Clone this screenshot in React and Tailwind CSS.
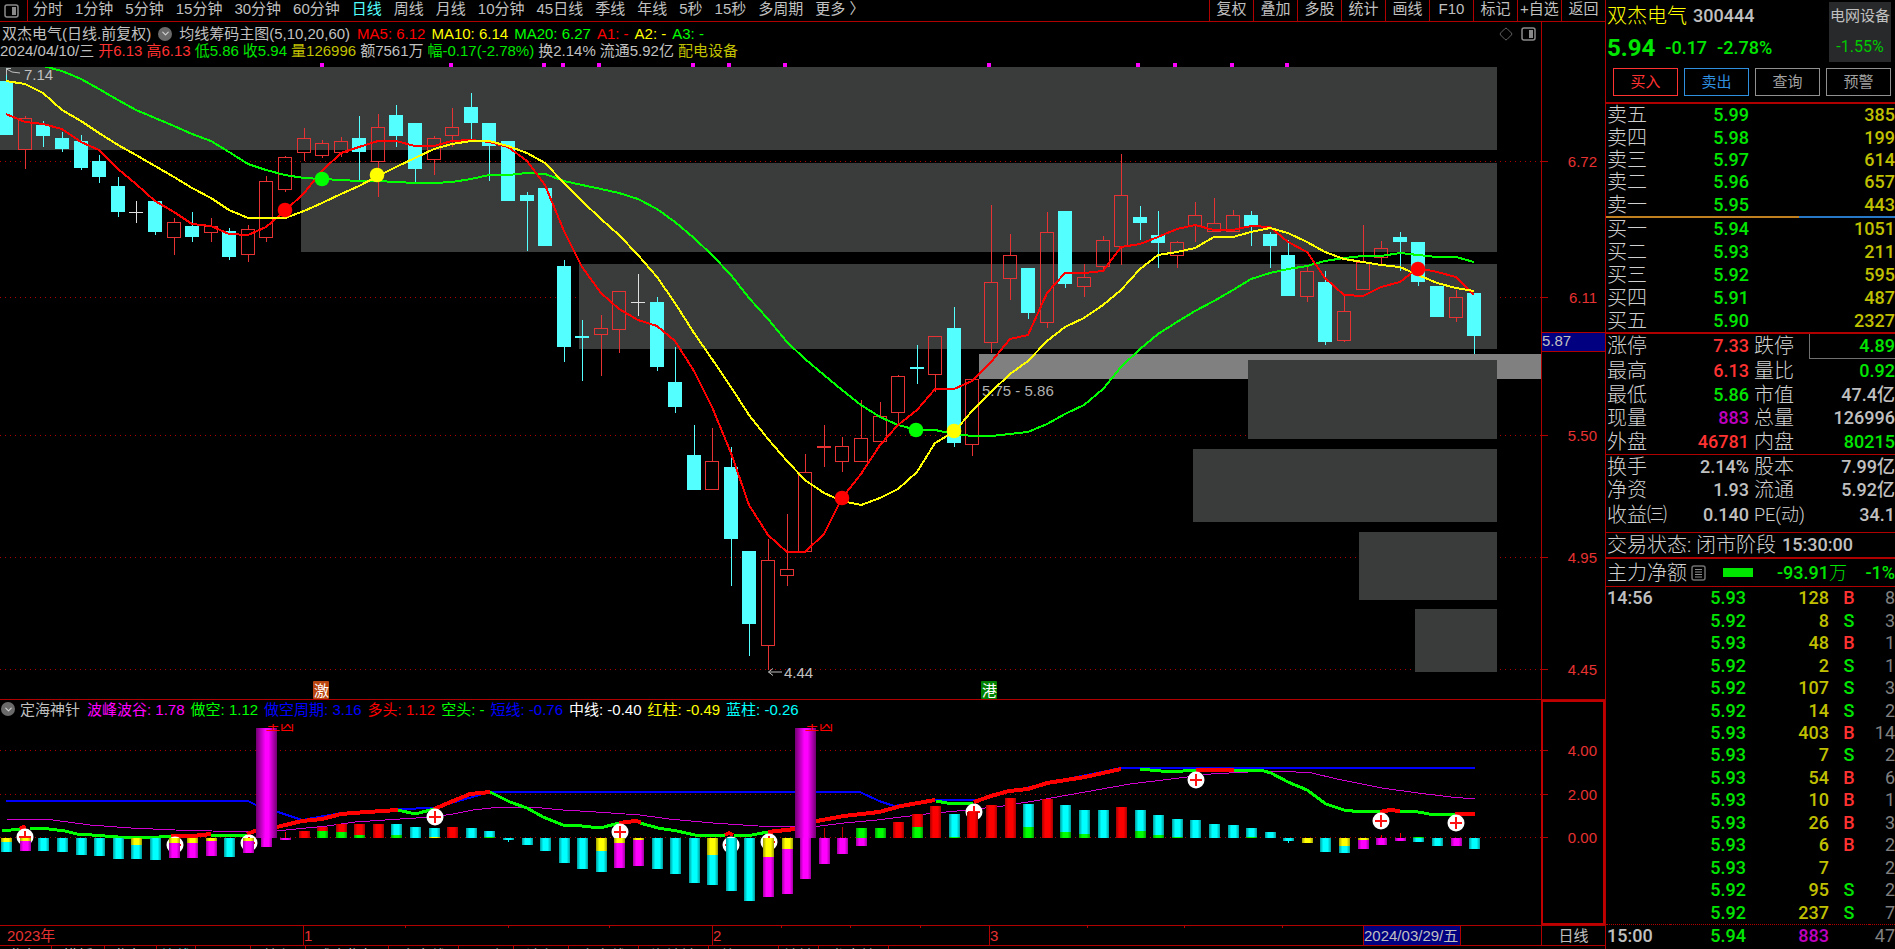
import React from 'react'
import clsx from 'clsx'
import { ChevronDown, Diamond } from 'lucide-react'

const periods = [
  '分时', '1分钟', '5分钟', '15分钟', '30分钟', '60分钟', '日线', '周线', '月线',
  '10分钟', '45日线', '季线', '年线', '5秒', '15秒', '多周期', '更多 〉',
]

const tools = ['复权', '叠加', '多股', '统计', '画线', 'F10', '标记', '+自选', '返回']

const maLegend = [
  { text: 'MA5: 6.12', color: 'text-[#ff0000]' },
  { text: 'MA10: 6.14', color: 'text-[#ffff00]' },
  { text: 'MA20: 6.27', color: 'text-[#00ff00]' },
  { text: 'A1: -', color: 'text-[#ff0000]' },
  { text: 'A2: -', color: 'text-[#ffff00]' },
  { text: 'A3: -', color: 'text-[#00ff00]' },
]

const dayInfo = [
  { text: '2024/04/10/三', color: 'text-[#c0c0c0]' },
  { text: '开6.13', color: 'text-[#ff3232]' },
  { text: '高6.13', color: 'text-[#ff3232]' },
  { text: '低5.86', color: 'text-[#00e600]' },
  { text: '收5.94', color: 'text-[#00e600]' },
  { text: '量126996', color: 'text-[#c0c000]' },
  { text: '额7561万', color: 'text-[#c0c0c0]' },
  { text: '幅-0.17(-2.78%)', color: 'text-[#00e600]' },
  { text: '换2.14%', color: 'text-[#c0c0c0]' },
  { text: '流通5.92亿', color: 'text-[#c0c0c0]' },
  { text: '配电设备', color: 'text-[#c0c000]' },
]

const subLegend = [
  { text: '波峰波谷: 1.78', color: 'text-[#ff00ff]' },
  { text: '做空: 1.12', color: 'text-[#00ff00]' },
  { text: '做空周期: 3.16', color: 'text-[#0000ff]' },
  { text: '多头: 1.12', color: 'text-[#ff0000]' },
  { text: '空头: -', color: 'text-[#00ff00]' },
  { text: '短线: -0.76', color: 'text-[#0000ff]' },
  { text: '中线: -0.40', color: 'text-[#ffffff]' },
  { text: '红柱: -0.49', color: 'text-[#ffff00]' },
  { text: '蓝柱: -0.26', color: 'text-[#00ffff]' },
]

// [kind, body top, body bottom, high, low] - d: down, u: up, x: doji
const candles = [
  ['d', 81, 135, 68, 135], ['u', 118, 150, 116, 169], ['d', 125, 136, 121, 147], ['d', 138, 149, 132, 152],
  ['d', 141, 168, 135, 170], ['d', 161, 177, 155, 183], ['d', 186, 212, 177, 217], ['x', 212, 213, 201, 223],
  ['d', 201, 232, 201, 235], ['u', 222, 238, 218, 255], ['d', 226, 237, 212, 242], ['u', 226, 233, 218, 242],
  ['d', 231, 257, 228, 260], ['u', 229, 255, 225, 262], ['u', 181, 238, 176, 242], ['u', 157, 190, 156, 192],
  ['u', 138, 153, 128, 161], ['u', 143, 156, 140, 158], ['u', 141, 153, 137, 157], ['d', 138, 152, 116, 180],
  ['u', 127, 162, 114, 197], ['d', 115, 136, 105, 147], ['d', 123, 169, 123, 182], ['u', 138, 160, 136, 175],
  ['u', 127, 136, 108, 147], ['d', 107, 123, 93, 139], ['d', 123, 146, 123, 181], ['d', 141, 201, 141, 201],
  ['d', 195, 201, 192, 251], ['d', 188, 246, 188, 246], ['d', 266, 347, 260, 362], ['d', 336, 338, 320, 381],
  ['u', 328, 335, 315, 376], ['u', 291, 330, 291, 353], ['x', 302, 303, 274, 316], ['d', 302, 367, 297, 371],
  ['d', 382, 407, 347, 413], ['d', 455, 490, 425, 490], ['u', 461, 490, 428, 490], ['d', 467, 539, 447, 586],
  ['d', 551, 624, 551, 656], ['u', 560, 646, 539, 670], ['u', 569, 576, 514, 586], ['u', 472, 552, 454, 552],
  ['u', 446, 448, 425, 467], ['u', 446, 462, 437, 472], ['u', 438, 462, 400, 462], ['u', 416, 442, 402, 442],
  ['u', 376, 413, 375, 424], ['d', 367, 369, 345, 384], ['u', 336, 375, 336, 392], ['d', 328, 443, 307, 447],
  ['u', 379, 445, 379, 456], ['u', 282, 343, 205, 353], ['u', 255, 279, 234, 300], ['d', 268, 313, 268, 319],
  ['u', 232, 323, 212, 328], ['d', 211, 284, 211, 288], ['u', 277, 287, 264, 297], ['u', 240, 267, 236, 271],
  ['u', 195, 247, 154, 265], ['d', 217, 223, 206, 240], ['d', 235, 243, 211, 268], ['u', 242, 256, 241, 268],
  ['u', 215, 226, 202, 242], ['u', 223, 232, 198, 232], ['u', 215, 232, 210, 232], ['d', 215, 227, 211, 246],
  ['d', 234, 246, 232, 268], ['d', 255, 296, 240, 296], ['u', 271, 297, 267, 302], ['d', 282, 342, 271, 345],
  ['u', 311, 341, 296, 342], ['u', 262, 290, 225, 290], ['u', 248, 258, 241, 265], ['d', 237, 242, 232, 271],
  ['d', 242, 282, 242, 286], ['d', 286, 317, 286, 317], ['u', 297, 318, 290, 322], ['d', 293, 336, 293, 354],
]

const ma5 = [
  114, 122, 124, 129, 142, 150, 169, 184, 201, 212, 224, 226, 234, 235, 227, 211, 193, 171, 153, 147,
  141, 141, 146, 146, 141, 140, 142, 147, 161, 185, 231, 267, 293, 309, 320, 326, 341, 371, 407, 453,
  505, 535, 552, 552, 534, 498, 474, 445, 425, 410, 389, 389, 381, 362, 339, 335, 293, 273, 273, 271,
  247, 244, 237, 229, 225, 230, 230, 226, 227, 242, 252, 278, 295, 296, 287, 282, 268, 272, 277, 295,
]

const ma10 = [
  81, 84, 93, 110, 121, 133, 145, 155, 166, 177, 188, 198, 210, 218, 218, 218, 211, 203, 194, 186,
  176, 167, 158, 149, 144, 141, 141, 146, 153, 163, 183, 201, 219, 235, 255, 277, 303, 333, 359, 387,
  415, 439, 461, 480, 493, 501, 505, 498, 489, 472, 443, 432, 411, 392, 374, 361, 341, 327, 318, 305,
  290, 269, 255, 252, 248, 237, 237, 232, 228, 233, 242, 252, 259, 262, 265, 267, 275, 283, 288, 291,
]

const ma20 = [
  50, 60, 66, 71, 79, 89, 100, 110, 118, 126, 134, 141, 152, 164, 170, 175, 178, 179, 180, 181,
  181, 182, 183, 183, 182, 179, 175, 175, 173, 174, 181, 185, 189, 193, 199, 209, 222, 238, 255, 275,
  298, 319, 342, 359, 375, 390, 405, 417, 425, 430, 430, 434, 436, 436, 434, 432, 424, 414, 405, 389,
  367, 349, 334, 322, 311, 301, 290, 279, 273, 269, 266, 261, 258, 256, 256, 253, 255, 257, 257, 262,
]

const chipBoxes = [
  [0, 67, 1497, 83], [301, 163, 1196, 89], [579, 264, 918, 85],
  [1248, 360, 249, 79], [1193, 449, 304, 73], [1359, 532, 138, 68], [1415, 609, 82, 63],
]

const signals = [
  [285, 210, '#ff0000'], [322, 179, '#00ff00'], [377, 175, '#ffff00'], [842, 498, '#ff0000'],
  [916, 430, '#00ff00'], [954, 431, '#ffff00'], [1418, 269, '#ff0000'],
]

const ticksTop = [322, 451, 544, 563, 599, 693, 729, 785, 989, 1138, 1175, 1232, 1287]

const priceScale = [[161, '6.72'], [297, '6.11'], [435, '5.50'], [557, '4.95'], [669, '4.45']]
const subScale = [[750, '4.00'], [794, '2.00'], [837, '0.00']]

// bar stacks of the lower indicator: [fill, top, bottom] per day
const bars = [
  [['y', 838, 842], ['c', 842, 852]], [['y', 838, 841], ['m', 841, 851]], [['c', 838, 851]], [['c', 838, 852]],
  [['c', 838, 855]], [['c', 838, 856]], [['c', 838, 859]], [['y', 838, 845], ['c', 845, 859]],
  [['c', 838, 860]], [['y', 838, 843], ['m', 843, 858]], [['y', 838, 843], ['m', 843, 858]], [['y', 838, 841], ['m', 841, 856]],
  [['c', 838, 857]], [['y', 838, 841], ['m', 841, 853]], [['m', 838, 847]], [['m', 838, 840]],
  [['r', 831, 838]], [['r', 827, 831], ['g', 831, 838]], [['r', 824, 832], ['g', 832, 838]], [['r', 824, 835], ['g', 835, 838]],
  [['r', 824, 838]], [['c', 824, 835], ['g', 835, 838]], [['c', 827, 838]], [['c', 828, 837], ['y', 837, 838]],
  [['r', 827, 838]], [['c', 828, 838]], [['c', 831, 837], ['g', 837, 838]], [['c', 838, 840]],
  [['c', 838, 845]], [['c', 838, 851]], [['c', 838, 863]], [['c', 838, 869]],
  [['y', 838, 851], ['c', 851, 872]], [['y', 838, 843], ['m', 843, 868]], [['y', 838, 840], ['m', 840, 866]], [['c', 838, 869]],
  [['c', 838, 874]], [['c', 838, 883]], [['y', 838, 855], ['c', 855, 885]], [['c', 838, 891]],
  [['c', 838, 901]], [['y', 838, 857], ['m', 857, 897]], [['y', 838, 849], ['m', 849, 894]], [['m', 838, 879]],
  [['m', 838, 864]], [['m', 838, 854]], [['g', 828, 838], ['m', 838, 846]], [['g', 828, 838]],
  [['r', 822, 838]], [['r', 814, 827], ['g', 827, 838]], [['r', 806, 838]], [['c', 814, 837], ['g', 837, 838]],
  [['r', 812, 838]], [['r', 805, 838]], [['r', 798, 838]], [['c', 804, 827], ['g', 827, 838]],
  [['r', 799, 838]], [['c', 805, 832], ['g', 832, 838]], [['c', 810, 834], ['g', 834, 838]], [['c', 810, 838]],
  [['r', 807, 838]], [['c', 810, 831], ['g', 831, 838]], [['c', 815, 835], ['g', 835, 838]], [['c', 819, 837], ['g', 837, 838]],
  [['c', 820, 838]], [['c', 824, 838]], [['c', 825, 838]], [['c', 828, 837], ['g', 837, 838]],
  [['c', 832, 838]], [['c', 838, 841]], [['y', 838, 843]], [['c', 838, 852]],
  [['y', 838, 846], ['c', 846, 853]], [['y', 838, 840], ['m', 840, 849]], [['m', 838, 845]], [['m', 838, 841]],
  [['g', 837, 838], ['c', 838, 842]], [['c', 838, 846]], [['m', 838, 846]], [['c', 838, 849]],
]

const barWicks = [
  [15, 832, 838, '#ff0000'], [27, 840, 842, '#00ffff'], [44, 828, 838, '#c00000'], [45, 827, 838, '#c00000'],
  [69, 841, 843, '#00ffff'], [74, 835, 838, '#ff0000'], [75, 833, 838, '#ff0000'],
]

const gradients = [
  ['y', '#ffff00', '#a0a000'], ['c', '#00ffff', '#009a9a'], ['m', '#ff00ff', '#a000a0'],
  ['r', '#ff0000', '#a80000'], ['g', '#00ff00', '#00a000'],
]

const greenRuns = [
  '2,831 20,829', '30,828 49,829 65,831 77,834 92,835 118,837 147,838 171,836', '211,835 247,835',
  '398,810 415,814 434,809', '490,792 510,802 527,808 543,817 563,825 582,826 600,828 619,823',
  '640,823 658,828 677,831 695,835 725,835', '734,835 752,835 768,832', '936,801 952,804 973,803',
  '1140,769 1171,772 1196,770', '1234,770 1250,770 1264,771 1271,773 1288,782 1307,790 1326,804 1344,810 1361,812 1380,811',
  '1400,811 1418,812 1435,815 1455,814',
]

const redRuns = [
  '20,829 23,827 26,828', '171,836 193,836 211,834', '247,834 255,831 277,827 302,821 322,819 341,814 367,812 398,810',
  '434,809 453,801 470,794 490,792', '619,823 635,821 641,822', '725,835 729,833 733,835',
  '768,832 795,829 817,821 844,816 879,812 901,806 935,800', '974,802 991,796 1009,791 1028,789 1047,783 1085,777 1121,769',
  '1196,770 1234,770', '1380,812 1390,810 1400,811', '1455,814 1475,814',
]

const blueLine =
  '6,801 248,801 256,805 278,812 302,820 341,813 398,809 434,808 490,792 860,792 879,801 894,806 936,800 977,800 987,797 1047,783 1121,768 1475,768'

const magentaLine =
  '6,819 53,820 90,825 131,828 175,830 212,831 249,832 286,830 327,826 355,822 400,819 433,817 453,814 473,810 500,807 531,807 563,810 596,812 640,815 669,819 713,823 758,826 795,827 820,826 844,823 877,820 926,814 967,810 1003,806 1040,800 1085,792 1130,784 1171,779 1211,774 1248,772 1280,771 1312,773 1337,779 1382,788 1418,793 1451,797 1475,799'

const crossMarks = [
  [25, 837], [175, 845], [249, 843], [435, 817], [620, 832], [731, 845],
  [769, 842], [974, 812], [1196, 780], [1381, 821], [1456, 823],
]

const asks = [
  ['卖五', '5.99', '385'], ['卖四', '5.98', '199'], ['卖三', '5.97', '614'],
  ['卖二', '5.96', '657'], ['卖一', '5.95', '443'],
]

const bids = [
  ['买一', '5.94', '1051'], ['买二', '5.93', '211'], ['买三', '5.92', '595'],
  ['买四', '5.91', '487'], ['买五', '5.90', '2327'],
]

const RED = 'text-[#ff3232]'
const GREEN = 'text-[#00e600]'
const GRAY = 'text-[#c0c0c0]'

const stats = [
  ['涨停', '7.33', RED, '跌停', '4.89', GREEN],
  ['最高', '6.13', RED, '量比', '0.92', GREEN],
  ['最低', '5.86', GREEN, '市值', '47.4亿', GRAY],
  ['现量', '883', 'text-[#c000c0]', '总量', '126996', GRAY],
  ['外盘', '46781', RED, '内盘', '80215', GREEN],
]

const basics = [
  ['换手', '2.14%', GRAY, '股本', '7.99亿', GRAY],
  ['净资', '1.93', GRAY, '流通', '5.92亿', GRAY],
  ['收益㈢', '0.140', GRAY, 'PE(动)', '34.1', GRAY],
]

const trades = [
  ['14:56', '5.93', '128', 'B', '8'], ['', '5.92', '8', 'S', '3'], ['', '5.93', '48', 'B', '1'],
  ['', '5.92', '2', 'S', '1'], ['', '5.92', '107', 'S', '3'], ['', '5.92', '14', 'S', '2'],
  ['', '5.93', '403', 'B', '14'], ['', '5.93', '7', 'S', '2'], ['', '5.93', '54', 'B', '6'],
  ['', '5.93', '10', 'B', '1'], ['', '5.93', '26', 'B', '3'], ['', '5.93', '6', 'B', '2'],
  ['', '5.93', '7', '', '2'], ['', '5.92', '95', 'S', '2'], ['', '5.92', '237', 'S', '7'],
]

const bottomTabs = [
  ['指标', 'w-[52px]'], ['模板', 'w-[53px]'], ['指标', 'w-[52px]'], ['均线', 'w-[39px]'], ['画面', 'w-[55px]'],
  ['特色', 'w-[55px]'], ['成交指标', 'w-[83px]'], ['多空线', 'w-[70px]'], ['两融', 'w-[55px]'], ['波段', 'w-[55px]'],
  ['主力线', 'w-[70px]'], ['海神针', 'w-[70px]'], ['筹码图', 'w-[70px]'], ['神针', 'w-[40px]'], ['龙虎榜', 'w-[70px]'],
]

const xAt = (i) => Math.round(6.3 + 18.58 * i)
const toPoints = (ys) => ys.map((y, i) => `${xAt(i)},${y}`).join(' ')

const PanelIcon = () => (
  <svg viewBox="0 0 16 16" className="h-4 w-4 shrink-0" aria-hidden="true">
    <rect x="1" y="2" width="13" height="12" rx="2" fill="none" stroke="#8a8a8a" strokeWidth="1.5" />
    <rect x="8" y="4" width="4" height="8" fill="#8a8a8a" />
  </svg>
)

const FoldButton = ({ label }) => (
  <button aria-label={label} className="flex h-[14px] w-[14px] shrink-0 items-center justify-center rounded-full bg-[#6a6a6a] text-[#d0d0d0]">
    <ChevronDown size={11} strokeWidth={2.5} />
  </button>
)

const Legend = ({ items, className }) => (
  <div className={clsx('flex', className)}>
    {items.map((item) => (
      <span key={item.text} className={item.color}>{item.text}</span>
    ))}
  </div>
)

const GridLines = ({ scale }) =>
  scale.map(([y]) => (
    <line key={y} x1="0" x2="1541" y1={y + 0.5} y2={y + 0.5} stroke="#b00000" strokeDasharray="1 4" />
  ))

const Candle = ({ i, data }) => {
  const [kind, top, bottom, high, low] = data
  const x = xAt(i)
  const color = { d: '#54ffff', u: '#e63232', x: '#e0e0e0' }[kind]
  if (kind === 'u' && bottom - top > 2) {
    return (
      <g stroke={color} fill="none">
        <rect x={x - 6.5} y={top + 0.5} width="13" height={bottom - top - 1} />
        {high < top && <line x1={x + 0.5} x2={x + 0.5} y1={high} y2={top} />}
        {low > bottom && <line x1={x + 0.5} x2={x + 0.5} y1={bottom} y2={low} />}
      </g>
    )
  }
  return (
    <g fill={color}>
      <rect x={x - 7} y={top} width="14" height={bottom - top} />
      <rect x={x} y={high} width="1" height={low - high} />
    </g>
  )
}

const MainChart = () => (
  <svg viewBox="0 60 1541 639" className="block h-auto w-full text-[15px]" role="img" aria-label="日线K线图">
    <g shapeRendering="crispEdges">
      <GridLines scale={priceScale} />
      <rect x="979" y="354" width="562" height="25" fill="#808080" />
      {chipBoxes.map(([x, y, w, h]) => (
        <rect key={y} x={x} y={y} width={w} height={h} fill="#3a3c3b" />
      ))}
      {ticksTop.map((x) => (
        <rect key={x} x={x - 2} y="63" width="4" height="4" fill="#ff00ff" />
      ))}
      {candles.map((c, i) => (
        <Candle key={i} i={i} data={c} />
      ))}
    </g>
    <text x="982" y="396" fill="#b0b0b0">5.75 - 5.86</text>
    <g fill="none" strokeWidth="2" strokeLinejoin="round" shapeRendering="crispEdges">
      <polyline points={toPoints(ma20)} stroke="#00ff00" clipPath="url(#plot)" />
      <polyline points={toPoints(ma5)} stroke="#ff0000" />
      <polyline points={toPoints(ma10)} stroke="#ffff00" />
    </g>
    <clipPath id="plot">
      <rect x="0" y="67" width="1541" height="620" />
    </clipPath>
    {signals.map(([x, y, fill]) => (
      <circle key={x} cx={x} cy={y} r="7.3" fill={fill} />
    ))}
    <g fill="none" stroke="#c0c0c0">
      <path d="M6.5 75V68.500H11M6.500 69L12 72L20 73" />
      <path d="M782 672H768.500M773 668.500L768.500 672L773 675.500" />
    </g>
    <text x="24" y="80" fill="#c0c0c0">7.14</text>
    <text x="784" y="678" fill="#c0c0c0">4.44</text>
    <rect x="313" y="681" width="16" height="18" rx="1" fill="#b8450f" />
    <text x="314" y="696" fill="#ffffff">激</text>
    <rect x="981" y="681" width="16" height="18" rx="1" fill="#008000" />
    <text x="982" y="696" fill="#ffffff">港</text>
  </svg>
)

const SubChart = () => (
  <svg viewBox="0 724 1541 201" className="block h-auto w-full text-[14px]" role="img" aria-label="定海神针指标">
    <defs>
      {gradients.map(([id, light, dark]) => (
        <linearGradient key={id} id={id}>
          <stop offset="0" stopColor={dark} />
          <stop offset="0.3" stopColor={light} />
          <stop offset="0.7" stopColor={light} />
          <stop offset="1" stopColor={dark} />
        </linearGradient>
      ))}
      <linearGradient id="pillar">
        <stop offset="0" stopColor="#700070" />
        <stop offset="0.45" stopColor="#ff00ff" />
        <stop offset="0.6" stopColor="#ff00ff" />
        <stop offset="1" stopColor="#700070" />
      </linearGradient>
    </defs>
    <g shapeRendering="crispEdges">
      <GridLines scale={subScale} />
    </g>
    <g fill="none" shapeRendering="crispEdges">
      <polyline points={blueLine} stroke="#0000ff" strokeWidth="2" />
      <polyline points={magentaLine} stroke="#d000d0" />
      {greenRuns.map((p) => (
        <polyline key={p} points={p} stroke="#00ff00" strokeWidth="3" />
      ))}
      {redRuns.map((p) => (
        <polyline key={p} points={p} stroke="#ff0000" strokeWidth="4" />
      ))}
    </g>
    {crossMarks.map(([x, y]) => (
      <g key={x}>
        <circle cx={x} cy={y} r="8.5" fill="#ffffff" />
        <path d={`M${x - 6} ${y}h12M${x} ${y - 6}v12`} stroke="#ff1010" strokeWidth="2" />
      </g>
    ))}
    <g shapeRendering="crispEdges">
      {barWicks.map(([i, top, bottom, fill]) => (
        <rect key={i} x={xAt(i)} y={top} width="1" height={bottom - top} fill={fill} />
      ))}
      <rect x="256" y="728" width="21" height="110" fill="url(#pillar)" />
      <rect x="795" y="728" width="21" height="110" fill="url(#pillar)" />
      {bars.map((stack, i) =>
        stack.map(([fill, top, bottom]) => (
          <rect key={`${i}-${fill}`} x={xAt(i) - 5} y={top} width="11" height={bottom - top} fill={`url(#${fill})`} />
        ))
      )}
    </g>
    <text x="266" y="730" fill="#ff0000">主凶</text>
    <text x="805" y="730" fill="#ff0000">主凶</text>
  </svg>
)

const AxisLabels = ({ scale }) =>
  scale.map(([y, label]) => (
    <g key={label}>
      <line x1="1541" x2="1548" y1={y + 0.5} y2={y + 0.5} stroke="#b00000" />
      <text x="1597" y={y + 6} textAnchor="end" fill="#e63232">{label}</text>
    </g>
  ))

const QuoteTable = ({ rows, className }) => (
  <table className={clsx('w-full table-fixed', className)}>
    <tbody>
      {rows.map(([name, price, volume]) => (
        <tr key={name}>
          <th scope="row" className="w-16 pl-px text-left text-xl leading-5 font-light text-[#d0d0d0]">{name}</th>
          <td className="w-[79px] text-right text-[#00e600]">{price}</td>
          <td className="text-right text-[#c0c000]">{volume}</td>
        </tr>
      ))}
    </tbody>
  </table>
)

const StatTable = ({ rows, className }) => (
  <table className={clsx('w-full table-fixed', className)}>
    <tbody>
      {rows.map(([a, aValue, aColor, b, bValue, bColor]) => (
        <tr key={a}>
          <th scope="row" className="w-16 pl-px text-left text-xl leading-5 font-light whitespace-nowrap text-[#d0d0d0]">{a}</th>
          <td className={clsx('w-[79px] text-right', aColor)}>{aValue}</td>
          <th scope="row" className="w-[60px] pl-[5px] text-left text-xl leading-5 font-light whitespace-nowrap text-[#d0d0d0]">
            {b === 'PE(动)' ? <span className="text-lg leading-5">{b}</span> : b}
          </th>
          <td className={clsx('text-right', bColor, b === '跌停' && 'border border-r-0 border-[#707070]')}>{bValue}</td>
        </tr>
      ))}
    </tbody>
  </table>
)

const TradeRow = ({ time, price, volume, side, count, volumeColor }) => (
  <tr>
    <td className="w-16 pl-px text-[#c0c0c0]">{time}</td>
    <td className="w-[76px] text-right text-[#00e600]">{price}</td>
    <td className={clsx('w-[83px] text-right', volumeColor)}>{volume}</td>
    <td className={clsx('w-10 text-center', side === 'B' ? 'text-[#ff3232]' : 'text-[#00e600]')}>{side}</td>
    <td className="text-right font-normal text-[#808080]">{count}</td>
  </tr>
)

const App = () => {
  return (
    <div className="flex h-screen overflow-hidden bg-black font-['Liberation_Sans','Noto_Sans_CJK_SC',sans-serif] text-[15px] leading-[17px] whitespace-nowrap text-[#c0c0c0]">
      <main className="min-w-0 flex-1">
        {/* Toolbar */}
        <div className="flex h-[22px] border-b border-[#b00000]">
          <div className="flex w-7 items-center border-r border-[#b00000] pl-1">
            <PanelIcon />
          </div>
          <nav className="flex flex-1 items-start gap-3 overflow-hidden pl-[5px]">
            {periods.map((p) => (
              <button key={p} className={p === '日线' ? 'text-[#54ffff]' : undefined}>{p}</button>
            ))}
          </nav>
          <div className="flex">
            {tools.map((t) => (
              <button key={t} className="flex w-11 items-start justify-center border-l border-[#b00000]">{t}</button>
            ))}
          </div>
        </div>

        {/* Price chart */}
        <section className="flex border-b border-[#b00000]">
          <div className="min-w-0 flex-1">
            <header className="h-[38px] pt-[3px]">
              <div className="flex items-center gap-[7px]">
                <h1 className="pl-0.5">双杰电气(日线.前复权)</h1>
                <FoldButton label="主图指标" />
                <span>均线筹码主图(5,10,20,60)</span>
                <Legend items={maLegend} className="gap-[6px]" />
                <div className="ml-auto flex items-center gap-2 pr-1 text-[#707070]">
                  <Diamond size={14} strokeWidth={1.5} />
                  <PanelIcon />
                </div>
              </div>
              <Legend items={dayInfo} className="gap-1" />
            </header>
            <MainChart />
          </div>
          <svg viewBox="1541 22 64 677" className="block h-auto w-16 shrink-0 text-[15px]" role="img" aria-label="价格坐标">
            <line x1="1541.5" x2="1541.5" y1="22" y2="699" stroke="#b00000" />
            <AxisLabels scale={priceScale} />
            <rect x="1541.5" y="332.5" width="64" height="19" fill="#000080" stroke="#b00000" />
            <text x="1542" y="346" fill="#c0c0c0">5.87</text>
          </svg>
        </section>

        {/* Indicator */}
        <section className="flex">
          <div className="min-w-0 flex-1">
            <header className="flex h-6 items-center gap-[5px] pb-[6px] pl-px">
              <FoldButton label="副图指标" />
              <h2 className="pr-0.5">定海神针</h2>
              <Legend items={subLegend} className="gap-[6px]" />
            </header>
            <SubChart />
          </div>
          <svg viewBox="1541 700 64 225" className="block h-auto w-16 shrink-0 text-[15px]" role="img" aria-label="指标坐标">
            <rect x="1542" y="701" width="62" height="223" fill="none" stroke="#c00000" strokeWidth="2" />
            <AxisLabels scale={subScale} />
          </svg>
        </section>

        {/* Time axis */}
        <div className="flex border-y border-[#b00000]">
          <svg viewBox="0 926 1541 19" className="block h-auto min-w-0 flex-1 text-[15px]" role="img" aria-label="时间坐标">
            <g stroke="#b00000">
              {[303, 712, 989].map((x) => (
                <line key={x} x1={x + 0.5} x2={x + 0.5} y1="926" y2="945" />
              ))}
              {[405, 508, 609, 781, 850, 920, 1087, 1184, 1282].map((x) => (
                <line key={x} x1={x + 0.5} x2={x + 0.5} y1="926" y2="928" />
              ))}
            </g>
            <g fill="#e63232">
              <text x="7" y="941">2023年</text>
              <text x="304" y="941">1</text>
              <text x="713" y="941">2</text>
              <text x="990" y="941">3</text>
            </g>
            <rect x="1363.5" y="925.5" width="97" height="20" fill="#000080" stroke="#b00000" />
            <text x="1364" y="941" fill="#c0c0c0">2024/03/29/五</text>
          </svg>
          <div className="flex w-16 items-center justify-center border-l border-[#b00000]">
            <span>日线</span>
          </div>
        </div>

        {/* Indicator tabs */}
        <div className="flex">
          {bottomTabs.map(([name, width], i) => (
            <button key={i} className={clsx('border-r border-[#b00000] pt-px text-center', width, i === 3 && 'text-[#54ffff]')}>{name}</button>
          ))}
        </div>
      </main>

      {/* Quote panel */}
      <aside className="w-[290px] shrink-0 overflow-hidden border-l border-[#b00000] font-['Roboto','Noto_Sans_CJK_SC',sans-serif] text-lg leading-5 font-medium">
        <div className="border-b-2 border-[#b00000] pb-[6px]">
          <div className="flex justify-between pt-0.5 pr-1">
            <div className="pl-px">
              <div className="flex items-center gap-[6px] pt-0.5">
                <h2 className="text-xl leading-6 font-light text-[#ffff00]">双杰电气</h2>
                <span>300444</span>
              </div>
              <div className="flex items-center gap-[10px] pt-2 text-[#00e600]">
                <span className="text-2xl leading-6 font-bold">5.94</span>
                <span>-0.17</span>
                <span>-2.78%</span>
              </div>
            </div>
            <a href="#sector" className="flex h-[60px] w-[62px] flex-col justify-between bg-[#28292b] pt-1 pb-[5px] text-center text-[15px] font-normal">
              <span className="text-[#c0c0c0]">电网设备</span>
              <span className="text-base leading-5 text-[#00c800]">-1.55%</span>
            </a>
          </div>
          <div className="mt-[6px] grid h-7 grid-cols-4 gap-[6px] pr-1 pl-[7px] text-[15px] font-normal">
            <button className="border border-[#ff3232] text-[#ff3232]">买入</button>
            <button className="border border-[#3090e0] text-[#3090e0]">卖出</button>
            <button className="border border-[#909090] text-[#a0a0a0]">查询</button>
            <button className="border border-[#909090] text-[#a0a0a0]">预警</button>
          </div>
        </div>

        <QuoteTable rows={asks} className="h-[112px]" />
        <div className="flex h-0.5">
          <div className="w-2/3 bg-[#c08020]" />
          <div className="flex-1 bg-[#2878c8]" />
        </div>
        <QuoteTable rows={bids} className="h-[114px]" />
        <StatTable rows={stats} className="h-[122px] border-t-2 border-[#b00000]" />
        <div className="border-t border-[#b00000] pb-[5px]">
          <StatTable rows={basics} className="h-[72px]" />
        </div>

        <div className="flex h-[25px] items-center gap-[6px] border-t border-[#b00000] pl-px">
          <span className="text-xl leading-5 font-light text-[#d0d0d0]">交易状态: 闭市阶段</span>
          <span>15:30:00</span>
        </div>
        <div className="flex h-[29px] items-center border-t-2 border-[#b00000] pl-px">
          <span className="text-xl leading-5 font-light text-[#d0d0d0]">主力净额</span>
          <svg viewBox="0 0 16 16" className="ml-1 h-4 w-4" aria-hidden="true">
            <rect x="1" y="1" width="13" height="14" rx="2" fill="none" stroke="#707070" strokeWidth="1.5" />
            <path d="M4 4.500h7M4 7h7M4 9.500h7M4 12h7" stroke="#909090" />
          </svg>
          <span className="ml-4 h-[9px] w-[30px] bg-[#00e600]" />
          <span className="flex-1 text-right text-[#00e600]">-93.91<span className="font-light">万</span></span>
          <span className="w-12 text-right text-[#00e600]">-1%</span>
        </div>

        <table className="h-[338px] w-full table-fixed border-t border-[#b00000]">
          <tbody>
            {trades.map(([time, price, volume, side, count], i) => (
              <TradeRow key={i} time={time} price={price} volume={volume} side={side} count={count} volumeColor="text-[#c0c000]" />
            ))}
          </tbody>
        </table>
        <table className="h-[22px] w-full table-fixed border-t border-dotted border-[#b00000]">
          <tbody>
            <TradeRow time="15:00" price="5.94" volume="883" side="" count="47" volumeColor="text-[#c000c0]" />
          </tbody>
        </table>
      </aside>
    </div>
  )
}

export default App
